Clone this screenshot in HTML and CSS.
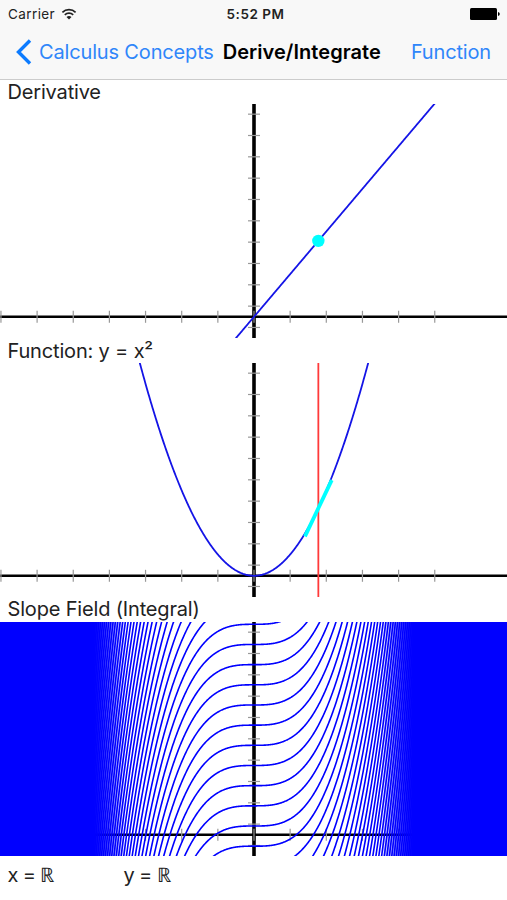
FILE: index.html
```html
<!DOCTYPE html>
<html lang="en">
<head>
    <meta charset="UTF-8">
    <meta name="viewport" content="width=device-width, initial-scale=1.0">
    <title>Derive/Integrate</title>
    <link rel="stylesheet" href="styles.css">
</head>
<body>

<header class="header">
    <div class="status-bar">
        <div class="carrier">
            <span>Carrier</span>
            <svg class="wifi" viewBox="0 0 16 12" width="16" height="12">
                <path d="M1.4 4.3 A9.6 9.6 0 0 1 14.6 4.3" />
                <path d="M3.8 6.8 A6.1 6.1 0 0 1 12.2 6.8" />
                <path class="wifi-dot" d="M8 11.6 L5.5 9.1 A3.6 3.6 0 0 1 10.5 9.1 Z" />
            </svg>
        </div>
        <span class="time">5:52 PM</span>
        <svg class="battery" viewBox="0 0 30 12" width="30" height="12">
            <rect x="0" y="0" width="27" height="12" rx="1.5" />
            <path d="M28 4 Q29.8 4.6 29.8 6 Q29.8 7.4 28 8 Z" />
        </svg>
    </div>
    <nav class="nav-bar">
        <a class="back">
            <svg viewBox="0 0 16 26" width="16" height="26">
                <path d="M14 1.5 L2.5 13 L14 24.5" />
            </svg>
            <span>Calculus Concepts</span>
        </a>
        <h1>Derive/Integrate</h1>
        <a class="function-link">Function</a>
    </nav>
</header>

<main>
    <h2>Derivative</h2>
    <svg class="graph" id="derivative" viewBox="0 0 507 234"></svg>

    <h2 class="function-title">Function: y = x²</h2>
    <svg class="graph" id="function" viewBox="0 0 507 234"></svg>

    <h2>Slope Field (Integral)</h2>
    <svg class="graph" id="integral" viewBox="0 0 507 234">
        <defs>
            <linearGradient id="dense">
                <stop offset="0" stop-color="blue" />
                <stop offset="0.185" stop-color="blue" />
                <stop offset="0.25" stop-color="blue" stop-opacity="0" />
                <stop offset="0.75" stop-color="blue" stop-opacity="0" />
                <stop offset="0.815" stop-color="blue" />
                <stop offset="1" stop-color="blue" />
            </linearGradient>
        </defs>
    </svg>

    <div class="ranges">
        <span>x = ℝ</span>
        <span>y = ℝ</span>
    </div>
</main>

<script src="graphs.js"></script>
</body>
</html>
```
FILE: styles.css
```css
body {
    font-family: Inter, "Liberation Sans", sans-serif;
    margin: 0;
    background-color: white;
    color: #222;
}
.header {
    box-sizing: border-box;
    height: 80px;
    background-color: #f8f8f8;
    border-bottom: 1px solid #ccc;
}
.status-bar {
    display: grid;
    grid-template-columns: 1fr auto 1fr;
    align-items: center;
    height: 27px;
    padding: 0 7px 0 8px;
    font-size: 13.5px;
}
.carrier {
    display: flex;
    align-items: center;
    gap: 6px;
    letter-spacing: 0.4px;
}
.wifi {
    fill: none;
    stroke: #222;
    stroke-width: 1.7;
}
.wifi-dot {
    fill: #222;
    stroke: none;
}
.time {
    padding-left: 3px;
    font-weight: 600;
    letter-spacing: 0.5px;
}
.battery {
    justify-self: end;
    fill: black;
}
.nav-bar {
    display: flex;
    align-items: center;
    height: 50px;
    padding: 0 16px;
    font-size: 20px;
    letter-spacing: -0.16px;
}
.nav-bar a {
    color: #2f86fa;
}
.back {
    display: flex;
    align-items: center;
    gap: 7px;
}
.back svg {
    fill: none;
    stroke: #0c7bff;
    stroke-width: 3.4;
}
h1 {
    margin: 0 0 0 9px;
    font-size: 20px;
    font-weight: 600;
    letter-spacing: 0.05px;
    color: black;
}
.function-link {
    margin-left: auto;
}
h2 {
    margin: 0;
    padding-left: 7.5px;
    height: 25px;
    line-height: 25px;
    font-size: 20px;
    font-weight: 400;
    letter-spacing: -0.17px;
}
h2:first-child {
    height: 24px;
    line-height: 24px;
}
.function-title {
    line-height: 27px;
}
.graph {
    display: block;
    width: 507px;
    height: 234px;
}
.axis-x {
    stroke: black;
    stroke-width: 2.4;
}
.axis-y {
    stroke: black;
    stroke-width: 3.6;
}
.tick {
    stroke: #999;
    stroke-width: 1.2;
}
.curve {
    fill: none;
    stroke: #1414e6;
    stroke-width: 1.8;
}
#integral .curve {
    stroke: #0000ff;
    stroke-width: 1.6;
}
.cursor {
    stroke: #ff3a3a;
    stroke-width: 1.8;
}
.tangent {
    stroke: cyan;
    stroke-width: 3.8;
}
.point {
    fill: cyan;
}
.ranges {
    display: grid;
    grid-template-columns: 116px auto;
    padding: 6px 7.5px;
    line-height: 26px;
    font-size: 20px;
    letter-spacing: -0.2px;
    word-spacing: -0.9px;
}
```
FILE: graphs.js
```javascript
const WIDTH = 507;
const HEIGHT = 234;
const ORIGIN_X = 254;
const ORIGIN_Y = 212.8;
const UNIT_X = 36.15;
const UNIT_Y = 21.33;
const CURSOR = 1.78;

const toX = x => ORIGIN_X + x * UNIT_X;
const toY = y => ORIGIN_Y - y * UNIT_Y;

function add(svg, tag, attributes) {
    const element = document.createElementNS("http://www.w3.org/2000/svg", tag);
    for (const name in attributes) {
        element.setAttribute(name, attributes[name]);
    }
    svg.appendChild(element);
}

function line(svg, className, x1, y1, x2, y2) {
    add(svg, "line", { class: className, x1, y1, x2, y2 });
}

function drawAxes(svg) {
    line(svg, "axis-x", 0, ORIGIN_Y, WIDTH, ORIGIN_Y);
    line(svg, "axis-y", ORIGIN_X, 0, ORIGIN_X, HEIGHT);
    for (let i = -7; i <= 5; i++) {
        line(svg, "tick", toX(i), ORIGIN_Y - 6, toX(i), ORIGIN_Y + 6);
    }
    for (let i = -0.5; i < 10; i++) {
        line(svg, "tick", ORIGIN_X - 6, toY(i), ORIGIN_X + 6, toY(i));
    }
}

// path of one function, only where it is inside the graph
function curvePath(f) {
    let d = "";
    let drawing = false;
    for (let px = -1; px <= WIDTH + 1; px += 0.5) {
        const y = toY(f((px - ORIGIN_X) / UNIT_X));
        if (y < -40 || y > HEIGHT + 40) {
            drawing = false;
            continue;
        }
        d += (drawing ? "L" : "M") + px + " " + y.toFixed(2);
        drawing = true;
    }
    return d;
}

const derivative = document.getElementById("derivative");
drawAxes(derivative);
add(derivative, "path", { class: "curve", d: curvePath(x => 2 * x) });
add(derivative, "circle", { class: "point", cx: toX(CURSOR), cy: toY(2 * CURSOR), r: 6.2 });

const graph = document.getElementById("function");
drawAxes(graph);
add(graph, "path", { class: "curve", d: curvePath(x => x * x) });
line(graph, "cursor", toX(CURSOR), 0, toX(CURSOR), HEIGHT);
const tangent = x => CURSOR * CURSOR + 2 * CURSOR * (x - CURSOR);
line(graph, "tangent", toX(CURSOR - 0.37), toY(tangent(CURSOR - 0.37)),
    toX(CURSOR + 0.37), toY(tangent(CURSOR + 0.37)));

// slope field: x³/3 + c for evenly spaced c
const integral = document.getElementById("integral");
drawAxes(integral);
// the curves run together towards both sides
add(integral, "rect", { width: WIDTH, height: HEIGHT, fill: "url(#dense)" });
for (let i = -140; i <= 140; i++) {
    const c = (ORIGIN_Y - 2.3 - i * 20.17) / UNIT_Y;
    add(integral, "path", { class: "curve", d: curvePath(x => x * x * x / 3 + c) });
}
```
